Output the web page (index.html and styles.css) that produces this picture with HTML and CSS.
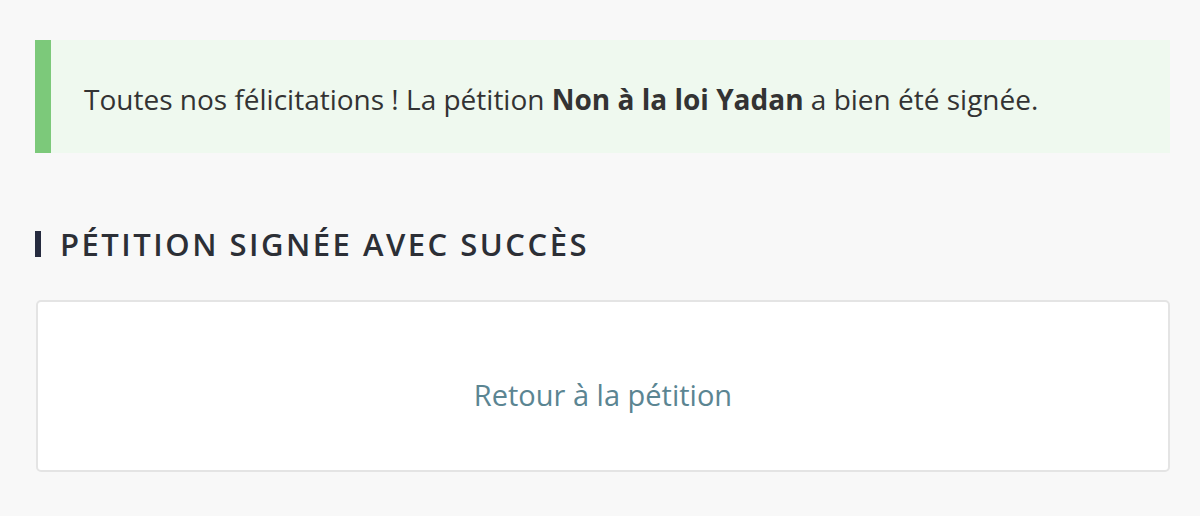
FILE: index.html
```html
<!DOCTYPE html>
<html>
<head>
  <title>Pétition signée</title>
  <link rel="stylesheet" href="styles.css">
</head>
<body>
  <div class="page">
    <div class="alert-success">
      <p>Toutes nos félicitations ! La pétition <strong>Non à la loi Yadan</strong> a bien été signée.</p>
    </div>

    <h2 class="section-title">Pétition signée avec succès</h2>

    <div class="card">
      <a class="back-link" href="#">Retour à la pétition</a>
    </div>
  </div>
</body>
</html>
```

FILE: styles.css
```css
body {
  margin: 0;
  background-color: #f8f8f8;
  font-family: "Open Sans", "Noto Sans", sans-serif;
  color: #333;
}
.page {
  padding: 40px 30px 40px 35px;
}
.alert-success {
  background-color: #eff9ef;
  border-left: 16px solid #7cc97a;
  padding: 4px 33px 0;
  height: 109px;
  display: flex;
  align-items: center;
}
.alert-success p {
  margin: 0;
  font-size: 28px;
  color: #333;
}
.alert-success strong {
  font-weight: 700;
}
.section-title {
  margin: 78px 0 43px;
  border-left: 6px solid #262b3f;
  padding-left: 19px;
  font-size: 31px;
  line-height: 26px;
  font-weight: 600;
  letter-spacing: 2.5px;
  text-transform: uppercase;
  color: #2c2f36;
}
.card {
  background-color: #fff;
  border: 2px solid #e4e4e4;
  border-radius: 5px;
  height: 172px;
  margin-left: 1px;
  padding-top: 16px;
  box-sizing: border-box;
  display: flex;
  align-items: center;
  justify-content: center;
}
.back-link {
  font-size: 29px;
  color: #5b8592;
  text-decoration: none;
}
```
